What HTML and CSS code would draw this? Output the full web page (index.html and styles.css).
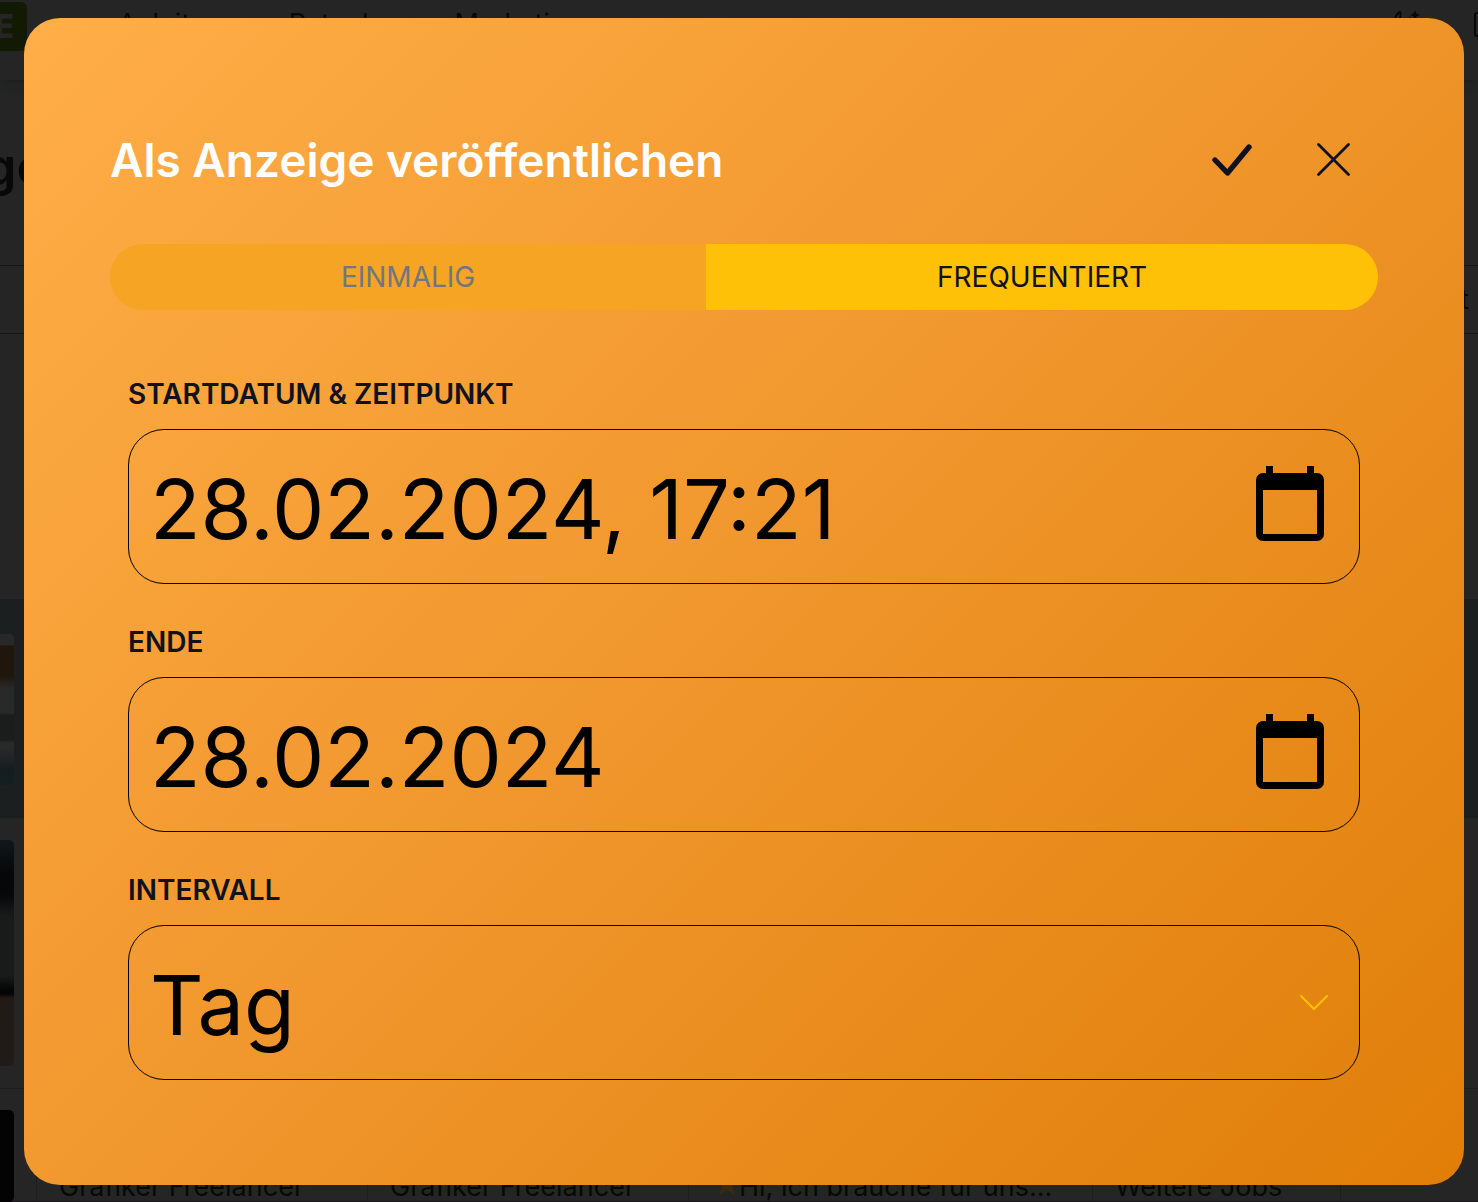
FILE: index.html
```html
<!DOCTYPE html>
<html lang="de">
<head>
<meta charset="utf-8">
<meta name="viewport" content="width=device-width, initial-scale=1">
<title>Als Anzeige veröffentlichen</title>
<link rel="stylesheet" href="styles.css">
</head>
<body>
<div class="page" aria-hidden="true">
  <div class="topbar">
    <span class="logo">E</span>
    <span class="topbar-item">Anleitung</span>
    <span class="topbar-item">Ratgeber</span>
    <span class="topbar-item">Marketing</span>
    <svg class="magic" width="32" height="32" viewBox="0 0 32 32"><path d="M2 18Q5 4 10 2q2 2-3 16" fill="none" stroke="currentColor" stroke-width="2"/><path d="m25 0 1.500 3.500L30 5l-3.500 1.500L25 10l-1.500-3.500L20 5l3.500-1.500zM19 6l1 2 2 1-2 1-1 2z" fill="currentColor"/></svg>
    <span class="panel-icon"></span>
  </div>
  <div class="page-title">ge</div>
  <div class="filter-row">t</div>
  <div class="band"><span class="thumb thumb-pool"></span></div>
  <div class="list-row"><span class="thumb thumb-room"></span></div>
  <div class="cards">
    <span class="thumb thumb-dark"></span>
    <div class="card">Grafiker Freelancer</div>
    <div class="card">Grafiker Freelancer</div>
    <div class="card card-wide"><svg width="24" height="24" viewBox="0 0 24 24"><path d="m12 0 3 8 9 .5-7 5.500 3 9-8-5-8 5 3-9-7-5.500L9 8z" fill="#3d2a08"/></svg>Hi, ich brauche für uns...</div>
    <div class="card card-last">Weitere Jobs</div>
  </div>
</div>
<div class="overlay">
  <form class="dialog" role="dialog" aria-labelledby="dialog-title">
    <header class="dialog-head">
      <h1 id="dialog-title">Als Anzeige veröffentlichen</h1>
      <button class="icon-button" type="button" aria-label="Bestätigen">
        <svg width="48" height="48" viewBox="0 0 48 48"><path d="M7 24 19.500 37 41 11" fill="none" stroke="currentColor" stroke-width="5.400" stroke-linecap="round" stroke-linejoin="round"/></svg>
      </button>
      <button class="icon-button" type="button" aria-label="Schließen">
        <svg width="48" height="48" viewBox="0 0 48 48"><path d="m8.500 8.500 30 30M38.500 8.500l-30 30" fill="none" stroke="currentColor" stroke-width="2.800" stroke-linecap="round"/></svg>
      </button>
    </header>
    <div class="tabs" role="tablist">
      <button class="tab" type="button" role="tab" aria-selected="false">EINMALIG</button>
      <button class="tab tab-active" type="button" role="tab" aria-selected="true">FREQUENTIERT</button>
    </div>
    <div class="fields">
      <div class="field">
        <label for="start">STARTDATUM &amp; ZEITPUNKT</label>
        <div class="control">
          <input id="start" type="text" value="28.02.2024, 17:21">
          <button class="calendar" type="button" aria-label="Startdatum wählen">
            <svg width="68" height="76" viewBox="0 0 68 76"><path fill="currentColor" fill-rule="evenodd" d="M10 0h7v7h34V0h7v7h3a7 7 0 0 1 7 7v54a7 7 0 0 1-7 7H7a7 7 0 0 1-7-7V14a7 7 0 0 1 7-7h3zM7 24v44h54V24z"/></svg>
          </button>
        </div>
      </div>
      <div class="field">
        <label for="end">ENDE</label>
        <div class="control">
          <input id="end" type="text" value="28.02.2024">
          <button class="calendar" type="button" aria-label="Enddatum wählen">
            <svg width="68" height="76" viewBox="0 0 68 76"><path fill="currentColor" fill-rule="evenodd" d="M10 0h7v7h34V0h7v7h3a7 7 0 0 1 7 7v54a7 7 0 0 1-7 7H7a7 7 0 0 1-7-7V14a7 7 0 0 1 7-7h3zM7 24v44h54V24z"/></svg>
          </button>
        </div>
      </div>
      <div class="field">
        <label for="interval">INTERVALL</label>
        <div class="control">
          <select id="interval"><option>Tag</option><option>Woche</option><option>Monat</option></select>
          <svg class="chevron" width="32" height="20" viewBox="0 0 32 20"><path d="m3 3 13 13L29 3" fill="none" stroke="currentColor" stroke-width="2" stroke-linecap="round" stroke-linejoin="round"/></svg>
        </div>
      </div>
    </div>
  </form>
</div>
</body>
</html>
```
FILE: styles.css
```css
* { box-sizing: border-box; }
body {
  margin: 0;
  position: relative;
  overflow-x: hidden;
  background: #252525;
  color: #101220;
  font-family: Inter, "Liberation Sans", sans-serif;
}
button, input, select {
  margin: 0;
  padding: 0;
  border: 0;
  background: none;
  color: inherit;
  font: inherit;
}
svg { display: block; flex: none; }

/* Dimmed page behind the dialog */
.page {
  position: absolute;
  inset: 0;
  overflow: hidden;
  color: #080808;
  font-size: 27px;
}
.topbar {
  display: flex;
  height: 80px;
  padding-top: 2px;
  box-shadow: 0 2px 8px #1c1f1f;
}
.logo {
  width: 27px;
  height: 49px;
  margin-right: 91px;
  padding-right: 13px;
  border-radius: 0 6px 6px 0;
  background: #131a04;
  color: #252525;
  font-size: 32px;
  font-weight: 800;
  line-height: 49px;
  display: flex;
  justify-content: flex-end;
}
.topbar-item { line-height: 44px; margin-right: 50px; }
.magic { margin: 8px 52px 0 auto; }
.panel-icon {
  width: 4px;
  height: 25px;
  margin-top: 10px;
  border: 2px solid #080808;
  border-right: 0;
  border-radius: 3px 0 0 3px;
}
.page-title {
  height: 185px;
  margin-left: -16px;
  padding-top: 55px;
  font-size: 52px;
  font-weight: 600;
  line-height: 64px;
}
.filter-row {
  height: 69px;
  padding-right: 9px;
  border: 1px solid #141414;
  border-width: 1px 0;
  line-height: 67px;
  text-align: right;
}
.band {
  height: 219px;
  margin-top: 265px;
  padding-top: 35px;
  background: #1c1f1f;
}
.thumb { display: block; width: 14px; border-radius: 0 5px 5px 0; }
.thumb-pool {
  height: 151px;
  background: linear-gradient(#282828 7%, #1f170b 8% 28%, #292929 36% 52%, #1b1d1d 54% 70%, #292929 72% 76%, #141d1e 90%, #122022);
}
.list-row {
  height: 271px;
  padding-top: 22px;
  border-bottom: 1px solid #1d1d1d;
}
.thumb-room {
  height: 226px;
  background: linear-gradient(#10181b, #060709 15% 24%, #191b1b 34% 60%, #050505 66% 68%, #211a15 70%, #201b18);
}
.cards {
  display: flex;
  height: 113px;
  border-bottom: 1px solid #171418;
}
.thumb-dark { height: 92px; margin: 21px 22px 0 0; background: #030303; }
.card {
  display: flex;
  width: 331px;
  padding: 82px 0 0 22px;
  border-left: 1px solid #1e1e1e;
  line-height: 32px;
  white-space: nowrap;
}
.card + .card { width: 321px; }
.card svg { margin-top: 1px; }
.card + .card-wide { width: 404px; padding-left: 26px; }
.card + .card-last { width: 249px; border-right: 1px solid #1e1e1e; }

/* Dialog */
.overlay {
  position: relative;
  padding: 18px 14px 17px 24px;
}
.dialog {
  padding: 110px 86px 105px;
  border-radius: 36px;
  background: linear-gradient(135deg, #ffae48, #f0962c 50%, #e07e08);
}
.dialog-head {
  display: flex;
  align-items: center;
  gap: 54px;
  height: 64px;
  padding-right: 20px;
}
.dialog-head h1 {
  flex: 1;
  margin: 0;
  color: #fff;
  font-size: 46px;
  font-weight: 600;
  line-height: 64px;
}
.icon-button { width: 48px; height: 48px; }
.tabs {
  display: flex;
  height: 66px;
  margin-top: 52px;
  overflow: hidden;
  border-radius: 33px;
}
.tab {
  flex: 1 1 auto;
  background: #f5a423;
  color: #717680;
  font-size: 28px;
}
.tab-active { background: #ffc107; color: #101220; }
.fields {
  display: flex;
  flex-direction: column;
  gap: 40px;
  margin-top: 66px;
  padding: 0 18px;
}
.field label {
  display: block;
  margin-bottom: 17px;
  font-size: 28px;
  font-weight: 600;
  line-height: 36px;
}
.control {
  position: relative;
  display: flex;
  align-items: center;
  height: 155px;
  padding: 0 35px 0 21px;
  border: 1px solid #000;
  border-radius: 36px;
  color: #000;
}
.control input, .control select {
  flex: 1;
  min-width: 0;
  height: 153px;
  padding-top: 4px;
  appearance: none;
  outline: 0;
  font-size: 83px;
}
.calendar { width: 68px; height: 76px; margin-bottom: 5px; }
.chevron {
  position: absolute;
  right: 29px;
  color: #ffc107;
  pointer-events: none;
}
```
